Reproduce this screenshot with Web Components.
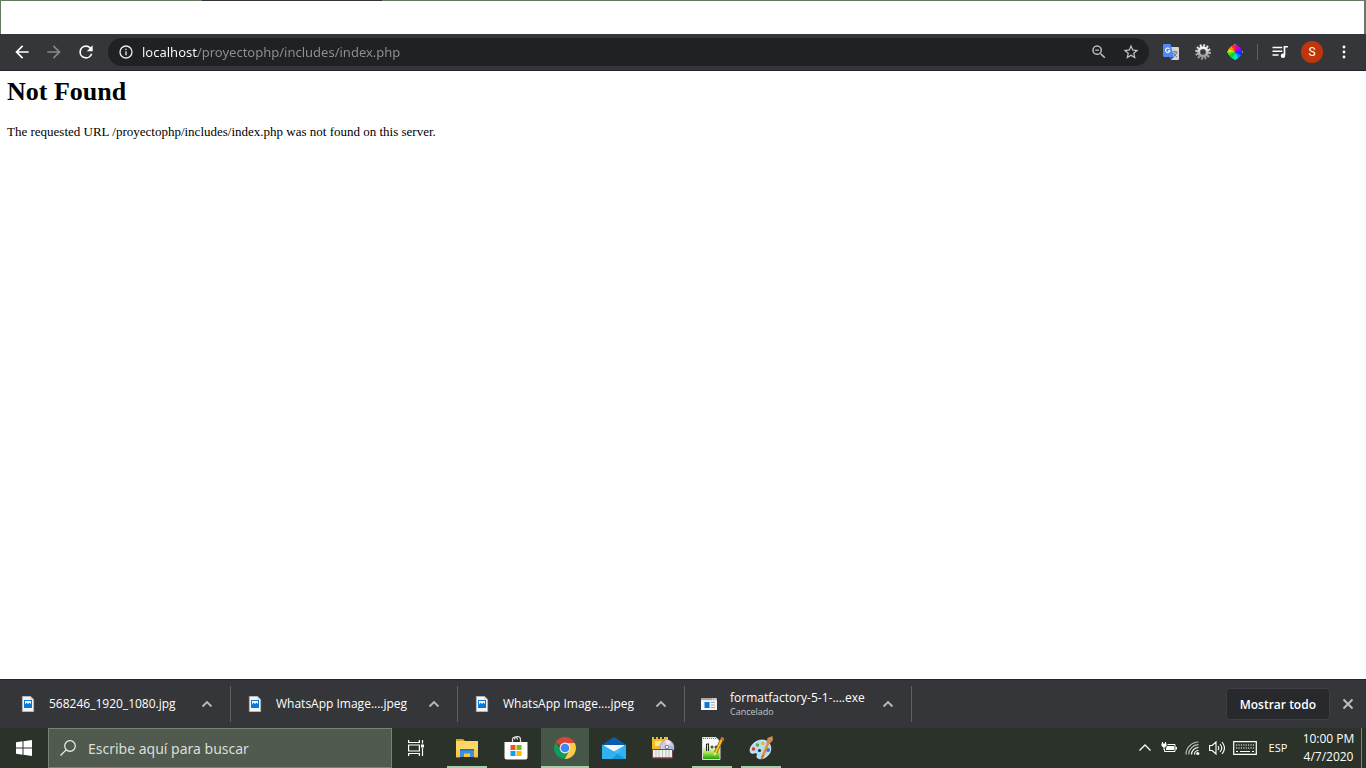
<!DOCTYPE html>
<html lang="es">
<head>
<meta charset="utf-8">
<title>404 Not Found</title>
<style>
  html, body { height: 100%; }
  body { margin: 0; background: #fff; font-family: "Open Sans", "Noto Sans", sans-serif; overflow: hidden; }
</style>
</head>
<body>
<desktop-shell>
  <window-strip slot="top"></window-strip>
  <browser-toolbar slot="top" host="localhost" path="/proyectophp/includes/index.php"></browser-toolbar>
  <error-page slot="page">
    <span slot="title">Not Found</span>
    The requested URL /proyectophp/includes/index.php was not found on this server.
  </error-page>
  <download-shelf slot="bottom">
    <download-item icon="image">568246_1920_1080.jpg</download-item>
    <download-item icon="image">WhatsApp Image....jpeg</download-item>
    <download-item icon="image">WhatsApp Image....jpeg</download-item>
    <download-item icon="exe" note="Cancelado">formatfactory-5-1-....exe</download-item>
  </download-shelf>
  <task-bar slot="bottom">
    <task-app icon="explorer" label="Explorador de archivos" running></task-app>
    <task-app icon="store" label="Microsoft Store"></task-app>
    <task-app icon="chrome" label="Google Chrome" active></task-app>
    <task-app icon="mail" label="Correo"></task-app>
    <task-app icon="factory" label="Format Factory"></task-app>
    <task-app icon="notepad" label="Notepad++" running></task-app>
    <task-app icon="paint" label="Paint" running></task-app>
  </task-bar>
</desktop-shell>
<script>
const ICONS = {
  back: [24, '<path fill="#fff" d="M20 11H7.83l5.59-5.59L12 4l-8 8 8 8 1.41-1.41L7.83 13H20z"/>'],
  forward: [24, '<path fill="#85878a" d="M4 11h12.17l-5.59-5.59L12 4l8 8-8 8-1.41-1.41L16.17 13H4z"/>'],
  reload: [24, '<path fill="#fff" d="M17.65 6.35A7.95 7.95 0 0 0 12 4a8 8 0 1 0 7.73 10h-2.08A6 6 0 1 1 12 6c1.66 0 3.14.69 4.22 1.78L13 11h7V4z"/>'],
  info: [24, '<path fill="#e8eaed" d="M11 7h2v2h-2zm0 4h2v6h-2zm1-9a10 10 0 1 0 0 20 10 10 0 0 0 0-20zm0 18a8 8 0 1 1 0-16 8 8 0 0 1 0 16z"/>'],
  zoomout: [24, '<path fill="#b9bbbe" d="M15.5 14h-.79l-.28-.27A6.5 6.5 0 1 0 13.73 14.43l.27.28v.79l5 4.99L20.49 19zm-6 0a4.5 4.5 0 1 1 0-9 4.5 4.5 0 0 1 0 9zM7 8.7h5v1.6H7z"/>'],
  star: [24, '<path fill="#c4c6c9" d="m22 9.24-7.19-.62L12 2 9.19 8.63 2 9.24l5.46 4.73L5.82 21 12 17.27 18.18 21l-1.63-7.03zM12 15.4l-3.76 2.27 1-4.28-3.32-2.88 4.38-.38L12 6.1l1.71 4.04 4.38.38-3.32 2.88 1 4.28z"/>'],
  translate: [16, '<path fill="#d5d5d5" d="M6 3h9a1 1 0 0 1 1 1v11a1 1 0 0 1-1 1H8z"/><path d="M9.5 8h5M12 6.700V8M14 8q-1 3.500-4 5M10.500 9q1 2.500 3.500 4" stroke="#68757c" fill="none"/><path fill="#2a56c6" d="M8 13h3l-3 3z"/><path fill="#4c8bf5" d="M1 0h6.500L11 13H1a1 1 0 0 1-1-1V1a1 1 0 0 1 1-1z"/><path d="M6.500 4.900a2.200 2.200 0 1 0 .4 1.900H5" stroke="#fff" stroke-width="1.100" fill="none"/>'],
  gear: [16, '<defs><linearGradient id="m" x1="0" y1="0" x2="0" y2="1"><stop stop-color="#f6f6f6"/><stop offset="1" stop-color="#999"/></linearGradient></defs><circle cx="8" cy="8" r="6.600" fill="none" stroke="url(#m)" stroke-width="2.400" stroke-dasharray="1.900 1.555"/><circle cx="8" cy="8" r="4.300" fill="none" stroke="url(#m)" stroke-width="3"/><circle cx="8" cy="8" r="2.700" fill="#35363a" stroke="#777" stroke-width=".6"/>'],
  wheel: [16, '<path fill="#ff2020" d="M8 8 5 2Q8 0 8 0z"/><path fill="#ff3030" d="M8 8 4.500 2 8 .3z"/><path fill="#f000b0" d="M8 8V.3L11.500 2z"/><path fill="#b800ff" d="m8 8 3.500-6L14 4.500z"/><path fill="#7010ff" d="m8 8 6-3.500L15.700 8z"/><path fill="#1030ff" d="M8 8h7.700L14 11.500z"/><path fill="#0088ff" d="m8 8 6 3.500-2.500 2.500z"/><path fill="#00d8ff" d="m8 8 3.500 6L8 15.700z"/><path fill="#00e890" d="M8 8v7.700L4.500 14z"/><path fill="#00e030" d="m8 8-3.500 6L2 11.500z"/><path fill="#60e800" d="m8 8-6 3.500L.3 8z"/><path fill="#e8e000" d="M8 8H.3L2 4.500z"/><path fill="#ff9800" d="M8 8 2 4.500 4.500 2z"/><path fill="none" stroke="#999" stroke-width=".8" d="M7 .5h2M7 15.500h2M.5 7v2M15.500 7v2"/>'],
  media: [24, '<path d="M2 6h13M2 11h13M2 16h8" stroke="#fff" stroke-width="2"/><path d="M22.500 5H18v11" stroke="#fff" stroke-width="2.200" fill="none"/><circle cx="16" cy="17" r="3" fill="#fff"/>'],
  dots: [24, '<g fill="#fff"><circle cx="12" cy="4.500" r="2.100"/><circle cx="12" cy="12" r="2.100"/><circle cx="12" cy="19.500" r="2.100"/></g>'],
  caret: [16, '<path d="m3.500 10.500 4.500-4.500 4.500 4.500" stroke="#b9babb" stroke-width="1.800" fill="none"/>'],
  close: [16, '<path d="m3.500 3.500 9 9m0-9-9 9" stroke="#c0c1c3" stroke-width="1.800"/>'],
  image: [16, '<path fill="#f4f4f4" stroke="#aaa" stroke-width=".6" d="M2.300.300h8.200l3.200 3.200v12.200H2.300z"/><path fill="#ccc" d="M10.500.500v3h3z"/><path fill="#0878d8" d="M4 4h8v8H4z"/><path fill="#fff" d="m5 8.500 1.500-2L8 8l1.500-1.500L11 8V5H5z"/>'],
  exe: [16, '<path fill="#f5f5f5" d="M0 2h16v12H0z"/><path fill="#a9a9a9" d="M0 2h16v2.200H0z"/><path d="M11 3h1m1 0h2" stroke="#fff"/><path fill="#0878d8" d="M3.500 6h5v6h-5z"/><path d="M10 6.500h4M10 9h4M10 11.500h4" stroke="#aaa"/>'],
  windows: [16, '<path fill="#fff" d="M0 2.200 6.500 1.300v6.200H0zM7.500 1.200 16 0v7.500H7.500zM0 8.500h6.500v6.200L0 13.800zM7.500 8.500H16V16l-8.500-1.200z"/>'],
  search: [16, '<circle cx="10" cy="6" r="5.300" stroke="#f0f3f0" stroke-width="1.200" fill="none"/><path d="M6.200 9.800.5 15.500" stroke="#f0f3f0" stroke-width="1.200"/>'],
  taskview: [16, '<g stroke="#fff" stroke-width="1.200" fill="none"><path d="M.6 0v2.500h10.800V0M.6 5h10.800v6H.6zM.6 16v-2.500h10.800V16M14.500 0v3.500M14.500 8v8"/></g><path fill="#fff" d="M13 4.500h3v3h-3z"/>'],
  explorer: [24, '<path fill="#e0a11d" d="M1 3h7l2 2H1z"/><path fill="#ffd767" d="M1 5h22v16H1z"/><path fill="#f9c846" d="M1 14h22v7H1z"/><path fill="#3a92dc" d="M5 13h14v8h-4v-3.500H9V21H5z"/><path fill="#1c73bd" d="M5 13h14v1.500H5z"/><path fill="#e9ae2a" d="M1 20.500h4v1H1zM19 20.500h4v1h-4z"/>'],
  store: [24, '<path d="M8.500 7V3.500a2.500 2.500 0 0 1 5 0M10.500 3.500a2.800 2.800 0 0 1 6 0V7" stroke="#ddd" stroke-width="1.200" fill="none"/><path fill="#fff" d="M.5 6h23v15.500a2 2 0 0 1-2 2h-19a2 2 0 0 1-2-2z"/><path fill="#f25022" d="M6.500 9h5v5h-5z"/><path fill="#7fba00" d="M12.500 9h5v5h-5z"/><path fill="#00a4ef" d="M6.500 15h5v5h-5z"/><path fill="#ffb900" d="M12.500 15h5v5h-5z"/>'],
  chrome: [24, '<path fill="#db4437" d="M12 12 2.470 6.500A11 11 0 0 1 21.530 6.500L21.500 7H12z"/><path fill="#ffcd40" d="M12 7h9.800A11 11 0 0 1 11.500 23L16.300 14.500z"/><path fill="#0f9d58" d="M2.470 6.500 7.700 14.500l8.600 0L11.500 23A11 11 0 0 1 2.470 6.500z"/><circle cx="12" cy="12" r="5.400" fill="#f1f1f1"/><circle cx="12" cy="12" r="4.300" fill="#4285f4"/>'],
  mail: [24, '<path fill="#0a5cad" d="M0 9 12 1l12 8v4H0z"/><path fill="#f5f8fa" d="M2 8h20v8H2z"/><path fill="#0a5cad" d="M0 9 12 1l12 8z"/><path fill="#2fb2f2" d="m0 8.500 12 7L24 8.500V23H0z"/><path fill="#159be3" d="m0 23 12-7.500L24 23z"/><path fill="#55c8f8" d="m24 8.500-12 7L0 23h10z" opacity=".5"/>'],
  factory: [24, '<path fill="#f2bc26" d="M1 1h2v2h2V1h2v2h2V1h2v2h2V1h4v12H1z"/><path fill="#ffe287" d="M4 5h9v5H4z"/><circle cx="16" cy="11" r="7" fill="#cacbe9" stroke="#8d8da8" stroke-width=".7"/><path fill="#f3e3f3" d="m16 11-2-7q4-1 6 2z"/><path fill="#a5bde5" d="m16 11 7-2v5z"/><circle cx="16" cy="11" r="1.800" fill="#fff" stroke="#777"/><path fill="#f1f1f1" stroke="#6b4c53" d="M1.500 13.500h20V22h-20z"/><path d="M11.500 14v8M5 14v8M8 14v8M15 14v8M18 14v8" stroke="#999" stroke-opacity=".6"/><path d="M1.500 22h20" stroke="#7d3940"/>'],
  notepad: [24, '<defs><linearGradient id="n" x1="0" y1="0" x2="0" y2="1"><stop offset=".4" stop-color="#f8faf5"/><stop offset=".7" stop-color="#a4e64a"/><stop offset="1" stop-color="#159a08"/></linearGradient></defs><path fill="url(#n)" stroke="#ddd" d="M2.500 1.500H16l4 4v18H2.500z"/><path d="M3 2.500h13" stroke="#777" stroke-dasharray="1 1"/><path d="M6.500 8v7m0-7h2v7M10.500 11h3m-1.500-1.500v3M14.500 11h3m-1.500-1.500v3" stroke="#222" stroke-width="1.100" fill="none"/><path d="m22 3-6.500 14" stroke="#7e4b08" stroke-width="3.400"/><path d="m21.500 4-6 13" stroke="#f8bd27" stroke-width="2.200"/><path d="m22 4 1.200-2.400" stroke="#d36b5c" stroke-width="3.600"/><path fill="#f4deb0" d="m13.800 16 3 1.600L13.800 20z"/>'],
  paint: [24, '<path fill="#b6def2" stroke="#e8f6fc" stroke-width=".8" d="M19 6C13 1 2 6 1 14c0 3 2 4 4 3 3-1 4 1 3 3-1 3 5 4 9 1 6-4 6-11 2-15z"/><circle cx="4.500" cy="13" r="1.700" fill="#d83831"/><circle cx="8.500" cy="9" r="1.700" fill="#53af38"/><circle cx="14" cy="7.500" r="1.700" fill="#f3b528"/><circle cx="10.500" cy="14.500" r="1.600" fill="#2a353a"/><circle cx="19" cy="14" r="2" fill="#3675d8"/><path d="m20 5-6.500 16" stroke="#e28a37" stroke-width="2.400"/><path fill="#cc8b57" d="m17.500 7 1-5 5-2 .5 4-3.500 4z"/><path d="m14 19-1.500 4" stroke="#b86a25" stroke-width="1.500"/>'],
  up: [16, '<path d="m2.500 10.500 5.500-5.500 5.500 5.500" stroke="#fff" stroke-width="1.300" fill="none"/>'],
  battery: [16, '<path fill="none" stroke="#fff" d="M6.500 4.500H14v7H3.500V9"/><path fill="#fff" d="M6 6h7v4H5V8.500zM14.500 7H16v2.500h-1.500z"/><path d="M1.500 2v2M4.500 2v2M3 7v3" stroke="#fff"/><path fill="#fff" d="M.5 3.500h5v2.300L4.200 7.300H1.800L.5 5.800z"/>'],
  wifi: [16, '<g fill="none" stroke="#fff" stroke-width="1.200"><path d="M9.500 14.500a4 4 0 0 1 4-4M6.500 14.500a7 7 0 0 1 7-7" /><path d="M3.700 14.500a10 10 0 0 1 9.800-9.800M1 14.500A12.600 12.600 0 0 1 13.500 2" stroke-opacity=".7"/></g><circle cx="12.800" cy="13.500" r="1.600" fill="#fff"/>'],
  speaker: [16, '<path fill="none" stroke="#fff" stroke-width="1.100" d="M.6 5.500h2.600L7 2v12l-3.800-3.500H.6zM9 6q1.500 2 0 4M11 4q3.500 4 0 8M13 2q5 6 0 12"/>'],
  keyboard: [24, '<path fill="none" stroke="#fff" stroke-width="1.200" d="M.7 5.700h22.600v12.600H.7z"/><path d="M3 9h18M3 12h18" stroke="#fff" stroke-width="1.200" stroke-dasharray="1.200 1.200"/><path d="M3 15.500h2m2 0h10m2 0h2" stroke="#fff" stroke-width="1.200"/>']
};

const define = (name, markup) => {
  customElements.define(name, class extends HTMLElement {
    connectedCallback() {
      if (this.shadowRoot) return;
      this.attachShadow({ mode: 'open' }).innerHTML = typeof markup === 'function' ? markup(this) : markup;
    }
  });
};

define('ui-icon', el => {
  const [box, body] = ICONS[el.getAttribute('name')];
  const size = el.getAttribute('size') || 16;
  return `<style>:host{display:block;flex:none;width:${size}px;height:${size}px}svg{display:block;width:100%;height:100%}</style>
  <svg viewBox="0 0 ${box} ${box}" aria-hidden="true">${body}</svg>`;
});

define('icon-button', el => `<style>
  :host{display:block;flex:none;width:var(--button-width,32px);height:32px}
  button{width:100%;height:100%;display:grid;place-items:center;border:0;padding:0;background:none;border-radius:16px;cursor:pointer}
  button:hover{background:#ffffff1a}
</style><button type="button" aria-label="${el.getAttribute('label')}"><ui-icon name="${el.getAttribute('icon')}" size="${el.getAttribute('size') || 16}"></ui-icon></button>`);

define('desktop-shell', `<style>
  :host{display:flex;flex-direction:column;height:100vh}
  main{flex:1;min-height:0;overflow:auto;background:#fff}
</style><slot name="top"></slot><main><slot name="page"></slot></main><slot name="bottom"></slot>`);

define('window-strip', `<style>
  :host{display:block;box-sizing:border-box;height:34px;background:#fff;border:solid #647b62;border-width:0 2px 0 1px}
  .edge{display:grid;grid-template-columns:201px 180px 1fr;height:1px;background:#647b62}
  .tab{grid-column:2;background:#35323a}
</style><div class="edge"><div class="tab"></div></div>`);

define('browser-toolbar', el => `<style>
  :host{display:block}
  nav{display:flex;align-items:center;height:36px;padding:0 6px;background:#35363a;border-bottom:1px solid #242326}
  form{flex:1;display:flex;align-items:center;height:28px;margin:0 6px;padding:0 2px 0 10px;border-radius:14px;background:#202124}
  input{flex:1;min-width:0;height:28px;margin-left:8px;padding:0;border:0;outline:0;font:13px "Noto Sans",sans-serif;color:#9aa0a6;
    background:linear-gradient(90deg,#fff 56px,#8e9194 56px) text;-webkit-text-fill-color:transparent}
  .line{width:1px;height:16px;margin:0 6px;background:#5f6063}
  .user{width:32px;padding:0;border:0;background:none;display:grid;place-items:center;cursor:pointer}
  .user span{width:22px;border-radius:50%;background:#bf360c;color:#fff;font:12px/22px Roboto,sans-serif}
</style><nav aria-label="Navegador">
  <icon-button icon="back" size="20" label="Atrás"></icon-button>
  <icon-button icon="forward" size="20" label="Adelante"></icon-button>
  <icon-button icon="reload" size="20" label="Recargar"></icon-button>
  <form><ui-icon name="info"></ui-icon>
    <input aria-label="Dirección" spellcheck="false" value="${el.getAttribute('host') + el.getAttribute('path')}">
    <icon-button icon="zoomout" size="18" label="Zoom"></icon-button><icon-button icon="star" size="18" label="Marcador"></icon-button></form>
  <icon-button icon="translate" label="Traductor"></icon-button>
  <icon-button icon="gear" label="Ajustes"></icon-button>
  <icon-button icon="wheel" label="Colores"></icon-button>
  <div class="line"></div>
  <icon-button icon="media" size="18" label="Multimedia"></icon-button>
  <button class="user" type="button" aria-label="Perfil S"><span>S</span></button>
  <icon-button icon="dots" label="Menú"></icon-button>
</nav>`);

define('error-page', `<style>
  :host{display:block;padding:6px 7px;color:#000;font:13px/15px "Liberation Serif",serif}
  h1{margin:0 0 17px;font-size:26px;line-height:30px}
  p{margin:0}
</style><h1><slot name="title"></slot></h1><p><slot></slot></p>`);

define('download-item', el => `<style>
  :host{display:flex;align-items:center;flex:0 1 227px;min-width:0;box-sizing:border-box;height:36px;padding-left:16px;border-right:1px solid #5f6063}
  .text{flex:1;min-width:0;margin-left:13px;white-space:nowrap;color:#fff;font-size:12px;line-height:16px}
  .note{color:#c3c4c6;font-size:9px;line-height:12px}
  icon-button{margin-right:7px}
</style><ui-icon name="${el.getAttribute('icon')}"></ui-icon>
<div class="text"><slot></slot>${el.hasAttribute('note') ? `<div class="note">${el.getAttribute('note')}</div>` : ''}</div>
<icon-button icon="caret" label="Opciones"></icon-button>`);

define('download-shelf', `<style>
  :host{display:flex;align-items:center;height:48px;padding-left:4px;background:#35363a;border-top:1px solid #242528}
  .all{height:32px;margin-left:auto;padding:0 13px;border:1px solid #3d3e42;border-radius:4px;background:#28292c;color:#fff;font:600 12px "Open Sans",sans-serif;white-space:nowrap;cursor:pointer}
  icon-button{margin:0 2px}
</style><slot></slot><button class="all" type="button">Mostrar todo</button><icon-button icon="close" label="Cerrar"></icon-button>`);

define('task-app', el => `<style>
  :host{display:block;flex:none;width:48px;height:40px}
  button{width:100%;height:100%;display:flex;flex-direction:column;align-items:center;padding:8px 0 0;border:0;background:none;cursor:pointer}
  button::after{content:"";width:40px;height:2px;margin-top:auto}
  :host([running]) button::after,:host([active]) button::after{background:#a3cfa7}
  :host([active]) button{background:#465749}
  :host([active]) button::after{width:48px}
</style><button type="button" aria-label="${el.getAttribute('label')}"><ui-icon name="${el.getAttribute('icon')}" size="24"></ui-icon></button>`);

define('task-bar', `<style>
  :host{display:flex;align-items:center;height:40px;background:#2a322a;color:#fff;--button-width:48px}
  label{display:flex;align-items:center;box-sizing:border-box;flex:0 1 344px;height:40px;padding-left:11px;border:1px solid #788278;background:#505a4f}
  input{flex:1;min-width:0;margin-left:12px;padding:0;border:0;outline:0;background:none;color:#fff;font:14px "Noto Sans",sans-serif}
  input::placeholder{color:#dadeda;opacity:1}
  .apps{display:flex;gap:1px;margin-left:3px}
  .tray{display:flex;align-items:center;margin-left:auto;--button-width:24px}
  .keys{--button-width:31px}
  .lang,.clock{padding:0;border:0;background:none;color:#fff;font:12px/18px "Open Sans",sans-serif;cursor:pointer}
  .lang{width:36px;font-size:11px}
  .clock{width:65px;white-space:nowrap}
  .peek{width:4px;height:40px;border-left:1px solid #7c827c}
</style>
<icon-button icon="windows" label="Inicio"></icon-button>
<label><ui-icon name="search"></ui-icon><input type="search" placeholder="Escribe aquí para buscar" aria-label="Escribe aquí para buscar"></label>
<icon-button icon="taskview" label="Vista de tareas"></icon-button>
<div class="apps"><slot></slot></div>
<div class="tray">
  <icon-button icon="up" label="Iconos ocultos"></icon-button>
  <icon-button icon="battery" label="Batería"></icon-button>
  <icon-button icon="wifi" label="Red"></icon-button>
  <icon-button icon="speaker" label="Volumen"></icon-button>
  <icon-button class="keys" icon="keyboard" size="24" label="Teclado"></icon-button>
  <button class="lang" type="button">ESP</button>
  <button class="clock" type="button"><time datetime="2020-04-07T22:00">10:00 PM<br>4/7/2020</time></button>
  <div class="peek"></div>
</div>`);
</script>
</body>
</html>
